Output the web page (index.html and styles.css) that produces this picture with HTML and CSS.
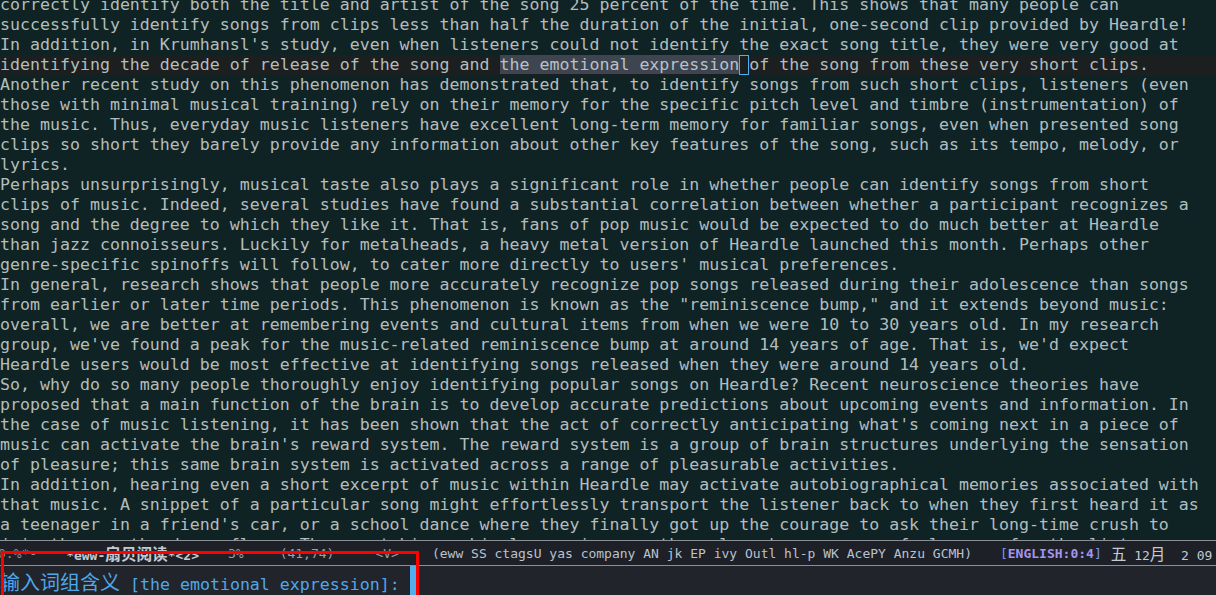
FILE: index.html
```html
<!DOCTYPE html>
<html>
<head>
<meta charset="utf-8">
<link rel="stylesheet" href="styles.css">
</head>
<body>
<div class="frame">
  <div class="buffer">
    <div class="lines">
<div class="ln">correctly identify both the title and artist of the song 25 percent of the time. This shows that many people can</div>
<div class="ln">successfully identify songs from clips less than half the duration of the initial, one-second clip provided by Heardle!</div>
<div class="ln">In addition, in Krumhansl's study, even when listeners could not identify the exact song title, they were very good at</div>
<div class="ln hl">identifying the decade of release of the song and <span class="region">the emotional expression</span><span class="cursor"> </span>of the song from these very short clips.</div>
<div class="ln">Another recent study on this phenomenon has demonstrated that, to identify songs from such short clips, listeners (even</div>
<div class="ln">those with minimal musical training) rely on their memory for the specific pitch level and timbre (instrumentation) of</div>
<div class="ln">the music. Thus, everyday music listeners have excellent long-term memory for familiar songs, even when presented song</div>
<div class="ln">clips so short they barely provide any information about other key features of the song, such as its tempo, melody, or</div>
<div class="ln">lyrics.</div>
<div class="ln">Perhaps unsurprisingly, musical taste also plays a significant role in whether people can identify songs from short</div>
<div class="ln">clips of music. Indeed, several studies have found a substantial correlation between whether a participant recognizes a</div>
<div class="ln">song and the degree to which they like it. That is, fans of pop music would be expected to do much better at Heardle</div>
<div class="ln">than jazz connoisseurs. Luckily for metalheads, a heavy metal version of Heardle launched this month. Perhaps other</div>
<div class="ln">genre-specific spinoffs will follow, to cater more directly to users' musical preferences.</div>
<div class="ln">In general, research shows that people more accurately recognize pop songs released during their adolescence than songs</div>
<div class="ln">from earlier or later time periods. This phenomenon is known as the "reminiscence bump," and it extends beyond music:</div>
<div class="ln">overall, we are better at remembering events and cultural items from when we were 10 to 30 years old. In my research</div>
<div class="ln">group, we've found a peak for the music-related reminiscence bump at around 14 years of age. That is, we'd expect</div>
<div class="ln">Heardle users would be most effective at identifying songs released when they were around 14 years old.</div>
<div class="ln">So, why do so many people thoroughly enjoy identifying popular songs on Heardle? Recent neuroscience theories have</div>
<div class="ln">proposed that a main function of the brain is to develop accurate predictions about upcoming events and information. In</div>
<div class="ln">the case of music listening, it has been shown that the act of correctly anticipating what's coming next in a piece of</div>
<div class="ln">music can activate the brain's reward system. The reward system is a group of brain structures underlying the sensation</div>
<div class="ln">of pleasure; this same brain system is activated across a range of pleasurable activities.</div>
<div class="ln">In addition, hearing even a short excerpt of music within Heardle may activate autobiographical memories associated with</div>
<div class="ln">that music. A snippet of a particular song might effortlessly transport the listener back to when they first heard it as</div>
<div class="ln">a teenager in a friend's car, or a school dance where they finally got up the courage to ask their long-time crush to</div>
<div class="ln">join them on the dance floor. These autobiographical memories can themselves be a source of pleasure for the listener.</div>
    </div>
  </div>
  <div class="modeline">
    <span class="ml-state">0.%*-</span>
    <span class="ml-name">*eww-<span class="cjk-s">扇贝阅读</span>*&lt;2&gt;</span>
    <span class="ml-pct">3%</span>
    <span class="ml-pos">(41,74)</span>
    <span class="ml-evil">&lt;V&gt;</span>
    <span class="ml-modes">(eww SS ctagsU yas company AN jk EP ivy Outl hl-p WK AcePY Anzu GCMH)</span>
    <span class="ml-input"><span class="br">[</span><b>ENGLISH:0:4</b><span class="br">]</span></span>
    <span class="ml-date"><span class="cjk-s">五</span> 12<span class="cjk-s">月</span>  2 09</span>
  </div>
  <div class="minibuffer">
    <span class="prompt"><span class="cjk-l">输入词组含义</span> [the emotional expression]: </span><span class="mb-cursor"></span>
  </div>
  <div class="annot"></div>
</div>
</body>
</html>
```

FILE: styles.css
```css
html, body {
  margin: 0;
  padding: 0;
  background: #102324;
  overflow: hidden;
}

.frame {
  position: relative;
  width: 1216px;
  height: 595px;
  overflow: hidden;
  display: flex;
  flex-direction: column;
}

.buffer {
  height: 540px;
  overflow: hidden;
  background: #102324;
  flex: none;
}

.lines {
  margin-top: -5px;
  font-family: "DejaVu Sans Mono", "Liberation Mono", monospace;
  font-size: 16.6px;
  color: #b2bdbd;
}

.ln {
  height: 20px;
  line-height: 20px;
  white-space: pre;
}

.ln.hl {
  background: #1c1f20;
}

.region {
  background: #3e4551;
  color: #b9c1c6;
}

.cursor {
  display: inline-block;
  width: 10px;
  height: 20px;
  box-sizing: border-box;
  border: 1px solid #51afef;
  vertical-align: top;
}

.modeline {
  flex: none;
  height: 24px;
  border-top: 1px solid #8a9096;
  border-bottom: 1px solid #8a9096;
  background: #1d2026;
  display: flex;
  align-items: center;
  white-space: pre;
  font-family: "DejaVu Sans Mono", "Liberation Mono", monospace;
  font-size: 13px;
  color: #a9afb8;
}

.cjk-s {
  font-family: "Noto Sans CJK SC", sans-serif;
  font-size: 15.6px;
}

.ml-state { margin-left: -2px; color: #8b9199; }
.ml-name { margin-left: 29px; font-weight: bold; color: #c3cad4; }
.ml-pct { margin-left: 29px; color: #9aa0a8; }
.ml-pos { margin-left: 36px; color: #9aa0a8; }
.ml-evil { margin-left: 41px; color: #9aa0a8; }
.ml-modes { margin-left: 33px; color: #bbc2cf; }
.ml-input { margin-left: 28px; }
.ml-input .br { color: #7e97e6; }
.ml-input b { color: #a494ee; }
.ml-date { margin-left: 9px; color: #c3cad4; }

.minibuffer {
  flex: 1;
  background: #21242b;
  display: flex;
  align-items: flex-start;
  font-family: "DejaVu Sans Mono", "Liberation Mono", monospace;
  font-size: 16.6px;
  color: #4ea8ea;
  white-space: pre;
}

.prompt {
  line-height: 29px;
  height: 29px;
  padding-top: 1px;
}

.cjk-l {
  font-family: "Noto Sans CJK SC", sans-serif;
  font-size: 20px;
}

.mb-cursor {
  display: inline-block;
  width: 6px;
  height: 32px;
  background: #51afef;
}

.annot {
  position: absolute;
  left: 1px;
  top: 551px;
  width: 418px;
  height: 60px;
  box-sizing: border-box;
  border: 3px solid #ff0000;
}
```
